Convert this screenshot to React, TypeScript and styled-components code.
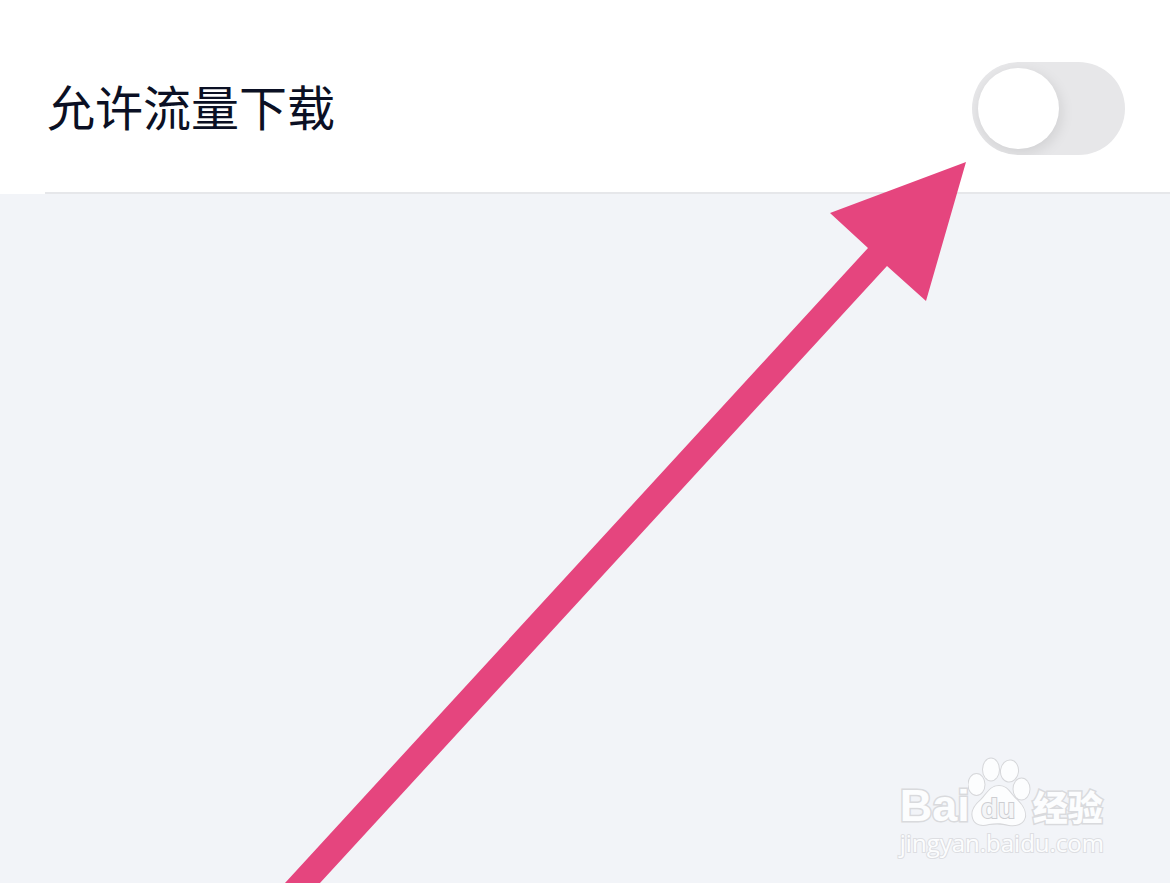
import React, { useState } from "react";
import styled, { createGlobalStyle } from "styled-components";

const GlobalStyle = createGlobalStyle`
  * { box-sizing: border-box; }
  body { margin: 0; background: #f2f4f8; }
`;

const Page = styled.main`
  position: relative;
  min-height: 100vh;
  overflow: hidden;
  background: #f2f4f8;
  font-family: "Noto Sans CJK SC", sans-serif;
`;

const SettingsList = styled.section`
  background: #fff;
  padding-left: 45px;
`;

const SettingRow = styled.div`
  display: flex;
  align-items: center;
  justify-content: space-between;
  padding: 62px 45px 37px 2px;
  border-bottom: 2px solid #e6e7ea;
`;

const SettingLabel = styled.label`
  padding-bottom: 8px;
  color: #0b1024;
  font-size: 48px;
  line-height: 72px;
`;

const Switch = styled.input`
  appearance: none;
  flex: none;
  display: flex;
  align-items: center;
  width: 153px;
  height: 93px;
  margin: 0;
  padding: 6px;
  border-radius: 47px;
  overflow: hidden;
  background: ${({ checked }) => (checked ? "#3478f6" : "#e7e7e9")};
  cursor: pointer;

  &::before {
    content: "";
    width: 81px;
    height: 81px;
    margin-left: ${({ checked }) => (checked ? "60px" : "0")};
    border-radius: 50%;
    background: #fff;
    box-shadow: 2px 4px 14px rgba(0, 0, 0, 0.1);
  }
`;

const Arrow = styled.svg`
  position: absolute;
  top: 160px;
  right: 200px;
  pointer-events: none;
`;

const Watermark = styled.footer`
  position: absolute;
  right: 66px;
  bottom: 24px;
  display: flex;
  flex-direction: column;
  color: #fcfdfe;
  -webkit-text-stroke: 3px #d9dadd;
  paint-order: stroke fill;
`;

const Brand = styled.div`
  display: flex;
  align-items: flex-end;
  height: 70px;
`;

const BrandLatin = styled.span`
  width: 68px;
  font: bold 45px/42px "Liberation Sans", sans-serif;
`;

const BrandChinese = styled.span`
  margin-left: 1px;
  font: 900 35px/42px "Noto Sans CJK SC", sans-serif;
`;

const Paw = styled.svg`
  flex: none;
  width: 64px;
  height: 70px;
`;

const PawText = styled.text`
  fill: #f4f5f7;
  stroke: #cdced2;
  stroke-width: 2px;
  font: bold 28px "Liberation Sans", sans-serif;
`;

const Site = styled.span`
  font: 24px/32px "Open Sans", sans-serif;
  -webkit-text-stroke: 2px #dddee2;
`;

export default function App() {
  const [allowed, setAllowed] = useState(false);

  return (
    <>
      <GlobalStyle />
      <Page>
        <SettingsList>
          <SettingRow>
            <SettingLabel htmlFor="cellular-download">允许流量下载</SettingLabel>
            <Switch
              id="cellular-download"
              type="checkbox"
              role="switch"
              checked={allowed}
              onChange={(e) => setAllowed(e.target.checked)}
            />
          </SettingRow>
        </SettingsList>

        <Arrow width="690" height="723" viewBox="280 160 690 723" aria-hidden="true">
          <path d="M966 162 830 213 868 248 285 883H320L887 266 926 301Z" fill="#e5457e" />
        </Arrow>

        <Watermark>
          <Brand>
            <BrandLatin>Bai</BrandLatin>
            <Paw viewBox="968 756 64 70" aria-label="du" role="img">
              <g fill="#fcfdfe" stroke="#d6d7da" strokeWidth="2">
                <ellipse cx="976.5" cy="783.5" rx="8" ry="10.5" />
                <ellipse cx="991" cy="768.5" rx="8" ry="11" />
                <ellipse cx="1009.5" cy="770" rx="8.5" ry="10.5" transform="rotate(8 1009.5 770)" />
                <ellipse cx="1021.5" cy="788" rx="8" ry="10.5" />
                <path d="M999 785C990 785 987 793 981 799C974 805 971 811 973 817C975 824 982 825 989 823C996 822 1002 822 1009 824C1017 825 1023 823 1025 816C1026 809 1022 804 1017 799C1010 793 1008 785 999 785Z" />
              </g>
              <PawText x="981" y="817">
                du
              </PawText>
            </Paw>
            <BrandChinese>经验</BrandChinese>
          </Brand>
          <Site>jingyan.baidu.com</Site>
        </Watermark>
      </Page>
    </>
  );
}
